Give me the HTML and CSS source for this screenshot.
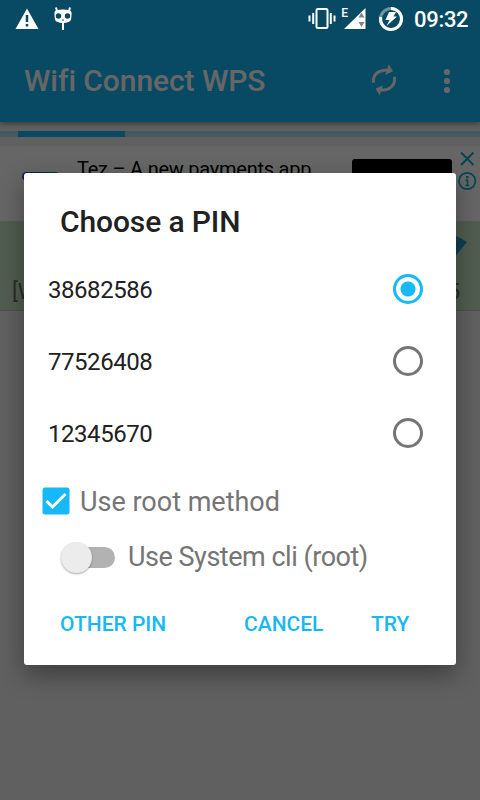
FILE: index.html
```html
<!DOCTYPE html>
<html lang="en">
<head>
<meta charset="utf-8">
<title>Wifi Connect WPS</title>
<link rel="stylesheet" href="styles.css">
</head>
<body>
<div class="screen">
  <div class="app">
    <header class="appbar">
      <h1 class="appbar-title">Wifi Connect WPS</h1>
      <svg class="refresh" width="28" height="34" viewBox="0 0 28 34" fill="none">
        <path d="M3.500 18.700C2.500 11 8 5.500 17 6.300" stroke="#fff" stroke-width="3"/>
        <path d="M18.700 .3L22.900 7.300L15.200 11Z" fill="#fff"/>
        <path d="M24.500 12.700C25.500 21 20 26.800 11 25.800" stroke="#fff" stroke-width="3"/>
        <path d="M9.500 31.600L5.700 24.500L12.900 21.400Z" fill="#fff"/>
      </svg>
      <svg class="more" width="8" height="26" viewBox="0 0 8 26" fill="#fff"><circle cx="4" cy="4" r="3.100"/><circle cx="4" cy="13" r="3.100"/><circle cx="4" cy="22" r="3.100"/></svg>
    </header>
    <div class="progress"><div class="progress-fill"></div></div>
    <section class="ad">
      <div class="ad-icon"></div>
      <div class="ad-title">Tez – A new payments app</div>
      <div class="ad-button"></div>
      <svg class="ad-marks" width="20" height="44" viewBox="0 0 20 44" fill="none" stroke="#00aecd" stroke-width="2">
        <path d="M4 2.500L16.500 15M16.500 2.500L4 15"/><circle cx="10.200" cy="31" r="8.200" stroke-width="1.700"/>
        <path d="M8.500 30H10.500V36M8.500 35.500H12.300" stroke-width="1.600"/><path d="M10.300 26V28.300" stroke-width="2.400"/>
      </svg>
    </section>
    <section class="network">
      <span class="network-caps">[W</span>
      <span class="network-level">5</span>
      <svg class="network-signal" width="54" height="46" viewBox="0 0 54 46"><path d="M0 8Q27 -10 53 8L27 40Z" fill="#299fd3"/></svg>
    </section>
  </div>
  <div class="scrim"></div>

  <div class="statusbar">
    <svg class="warn" width="24" height="22" viewBox="0 0 24 22"><path d="M12 .5L23.500 21H.5Z" fill="#fff"/><path d="M12 7V14M12 16V18.500" stroke="#084a64" stroke-width="2.500"/></svg>
    <svg class="cid" width="20" height="26" viewBox="0 0 20 26"><path d="M3 1.500L4 5M17 1.500L16 5M10 17V24" stroke="#fff" stroke-width="2" fill="none"/><path d="M3 4.500Q10 2.500 17 4.500Q19 5 18.500 9Q18.500 14.500 16.500 15.500Q10 18.500 3.500 15.500Q1.500 14.500 1.500 9Q1 5 3 4.500Z" fill="#fff"/><circle cx="5.500" cy="10" r="2.700" fill="#084a64"/><circle cx="14.500" cy="10" r="2.700" fill="#084a64"/><path d="M9 14H11" stroke="#084a64"/></svg>
    <span class="spacer"></span>
    <svg class="vibrate" width="28" height="22" viewBox="0 0 28 22" fill="none" stroke="#fff"><rect x="8.500" y="1" width="11" height="19" rx="1.500" stroke-width="2"/><path d="M5.200 5V16M22.800 5V16" stroke-width="2"/><path d="M1.500 7.500V13.500M26.500 7.500V13.500" stroke-width="2"/></svg>
    <span class="edge">E</span>
    <svg class="signal" width="22" height="22" viewBox="0 0 22 22"><path d="M21.500 0V21H0Z" fill="#fff"/><path d="M14.500 9.500L17.500 4.500L20.500 9.500ZM14.500 14H20.500L17.500 19Z" fill="#7c888c"/></svg>
    <svg class="battery" width="26" height="26" viewBox="0 0 26 26" fill="none"><circle cx="13" cy="13" r="10.500" stroke="#6d94a3" stroke-width="3"/><path d="M13 2.500A10.500 10.500 0 1 1 2.700 11" stroke="#fff" stroke-width="3"/><path d="M11 6H18L15.500 10.500H19L8.500 20L11.500 14H7.500Z" fill="#fff"/></svg>
    <span class="clock">09:32</span>
  </div>

  <main class="dialog">
    <h2 class="dialog-title">Choose a PIN</h2>
    <div class="pin"><span class="pin-code">38682586</span><span class="radio selected"></span></div>
    <div class="pin"><span class="pin-code">77526408</span><span class="radio"></span></div>
    <div class="pin"><span class="pin-code">12345670</span><span class="radio"></span></div>
    <div class="check-row">
      <svg class="checkbox" width="28" height="28" viewBox="0 0 28 28"><rect x=".5" y=".5" width="27" height="27" rx="2.500" fill="#16b8f8"/><path d="M4.500 14L10.500 20L23.500 7" fill="none" stroke="#fff" stroke-width="3"/></svg>
      <span class="check-label">Use root method</span>
    </div>
    <div class="switch-row">
      <span class="switch"><span class="thumb"></span></span>
      <span class="switch-label">Use System cli (root)</span>
    </div>
    <div class="actions"><span class="other">OTHER PIN</span><span class="cancel">CANCEL</span><span class="try">TRY</span></div>
  </main>
</div>
</body>
</html>
```
FILE: styles.css
```css
* { box-sizing: border-box; }
body { margin: 0; font-family: Roboto, "Liberation Sans", sans-serif; }
.screen { position: relative; width: 480px; height: 800px; overflow: hidden; }
.app { height: 800px; background: #f0f0f0; }
.appbar { position: relative; height: 122px; padding: 40px 29px 0 24px; display: flex; align-items: center; background: #14b8f8; box-shadow: 0 1px 6px rgba(0,0,0,.5); }
.appbar-title { margin: 0; flex: 1; color: #fff; font-size: 30px; font-weight: 500; line-height: 40px; letter-spacing: -.08px; white-space: nowrap; }
.refresh { margin-right: 45px; }
.progress { height: 6px; margin-top: 9px; padding-left: 18px; background: #b5dae8; }
.progress-fill { width: 107px; height: 6px; background: #14b8f8; }
.ad { height: 75px; margin-top: 9px; display: flex; align-items: flex-start; background: #fff; }
.ad-icon { width: 38px; height: 9px; margin: 26px 0 0 22px; border-radius: 5px; background: linear-gradient(90deg, #3150b6 55%, #06a270 85%); }
.ad-title { width: 275px; margin: 11px 0 0 17px; font-size: 20px; line-height: 24px; letter-spacing: -.24px; white-space: nowrap; color: #000; }
.ad-button { width: 100px; height: 40px; margin-top: 13px; border-radius: 3px; background: #000; }
.ad-marks { margin: 4px 0 0 5px; }
.network { position: relative; height: 90px; padding: 0 20px 5px 12px; display: flex; align-items: flex-end; justify-content: space-between; background: #cbe8cb; border-bottom: 1px solid #c5c5c5; font-size: 22px; line-height: 27px; color: #646f64; }
.network-signal { position: absolute; left: 414px; top: 13px; }
.scrim { position: absolute; inset: 0; background: rgba(0,0,0,.6); }
.statusbar { position: absolute; left: 0; top: 0; width: 480px; height: 38px; padding: 0 12px 0 15px; display: flex; align-items: center; color: #fff; }
.cid { margin-left: 14px; }
.spacer { flex: 1; }
.edge { margin: -13px 0 0 6px; font-size: 12px; font-weight: 500; line-height: 14px; }
.signal { margin-left: -4px; }
.battery { margin: -1px 0 0 12px; }
.clock { width: 54px; margin: 2px 0 0 10px; font-size: 22px; font-weight: 500; line-height: 26px; letter-spacing: -.3px; white-space: nowrap; }
.vibrate { margin-right: -1px; }
.dialog { position: absolute; left: 24px; top: 173px; width: 432px; height: 492px; border-radius: 3px; background: #fff; box-shadow: 0 10px 24px rgba(0,0,0,.36); color: #212121; }
.dialog-title { height: 80px; margin: 0; padding: 29px 0 0 36px; font-size: 30px; font-weight: 500; line-height: 40px; letter-spacing: -.12px; }
.pin { height: 72px; padding: 0 33px 0 24px; display: flex; align-items: center; justify-content: space-between; font-size: 24px; }
.pin-code { padding-top: 2px; letter-spacing: -.45px; }
.radio { width: 30px; height: 30px; border: 3px solid #757575; border-radius: 50%; }
.radio.selected { border-color: #16b8f8; background: radial-gradient(circle, #16b8f8 7px, #fff 8px); }
.check-row { height: 64px; padding-left: 18px; display: flex; align-items: center; color: #757575; font-size: 27px; }
.check-label { margin-left: 10px; padding-top: 2px; }
.switch-row { height: 48px; padding-left: 40px; display: flex; align-items: center; color: #757575; font-size: 27px; }
.switch { position: relative; width: 51px; height: 21px; margin-top: 1px; border-radius: 11px; background: #b2b2b2; }
.thumb { position: absolute; left: -3px; top: -5px; width: 31px; height: 31px; border-radius: 50%; background: #ececec; box-shadow: 0 1px 2px rgba(0,0,0,.35); }
.switch-label { margin-left: 13px; letter-spacing: -.48px; }
.actions { height: 84px; padding: 2px 0 0 36px; display: flex; align-items: center; color: #16b8f8; font-size: 21px; font-weight: 500; }
.other { width: 184px; }
.cancel { width: 127px; }
```
